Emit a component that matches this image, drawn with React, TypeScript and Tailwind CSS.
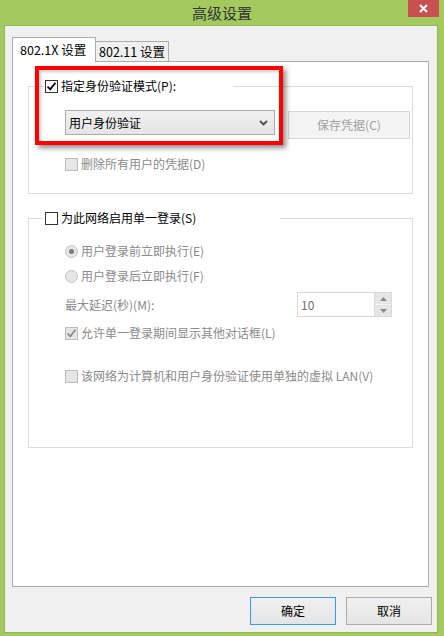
import React from "react";

function Check({ checked, disabled }: { checked?: boolean; disabled?: boolean }) {
  return (
    <span
      className={
        disabled
          ? "w-[13px] h-[13px] border border-[#bcbcbc] bg-[#e6e6e6] flex items-center justify-center shrink-0"
          : "w-[13px] h-[13px] border border-[#333333] bg-white flex items-center justify-center shrink-0"
      }
    >
      {checked && (
        <svg width="11" height="11" viewBox="0 0 11 11">
          <path
            d="M1.5 5.5 L4.2 8.3 L9.5 1.8"
            stroke={disabled ? "#8a8a8a" : "#000"}
            strokeWidth="1.8"
            fill="none"
          />
        </svg>
      )}
    </span>
  );
}

function Radio({ checked }: { checked?: boolean }) {
  return (
    <span className="w-[13px] h-[13px] rounded-full border border-[#c4c4c4] bg-[#e6e6e6] flex items-center justify-center shrink-0">
      {checked && <span className="w-[5px] h-[5px] rounded-full bg-[#7a7a7a]" />}
    </span>
  );
}

export default function App() {
  return (
    <div className="w-[444px] h-[636px] bg-[#a3c95f] flex flex-col font-['Noto_Sans_CJK_SC',sans-serif] text-[12px] leading-[16px] text-black overflow-hidden">
      {/* Title bar */}
      <div className="relative h-[25px] shrink-0 flex items-center justify-center">
        <span className="text-[15px] leading-[20px] text-[#333333] pt-[1px]">高级设置</span>
        <div className="absolute top-0 right-[5px] w-[31px] h-[17px] bg-[#c75050] flex items-center justify-center">
          <svg width="9" height="9" viewBox="0 0 9 9">
            <path d="M1 1 L8 8 M8 1 L1 8" stroke="#fff" strokeWidth="2" />
          </svg>
        </div>
      </div>

      {/* Client area */}
      <div className="ml-[4px] mr-[6px] h-[608px] border border-[#8fb64c] bg-[#f0f0f0] flex flex-col">
        {/* Tabs */}
        <div className="pt-[10px] pl-[7px] flex items-end h-[35px] shrink-0">
          <div className="relative z-10 -mb-px w-[84px] h-[25px] bg-white border border-b-0 border-[#acacac] flex items-center pl-[7px] pb-[1px] text-[12.5px]">
            802.1X 设置
          </div>
          <div className="w-[73px] h-[20px] bg-[#f0f0f0] border border-l-0 border-b-0 border-[#acacac] flex items-center pl-[3px] text-[12.5px]">
            802.11 设置
          </div>
        </div>

        {/* Tab panel */}
        <div className="relative ml-[7px] mr-[8px] h-[526px] shrink-0 bg-white border border-[#acacac] flex flex-col px-[15px]">
          {/* Group 1 */}
          <fieldset className="mt-[16px] h-[116px] border border-[#dcdcdc] px-0 flex flex-col">
            <legend className="ml-[14px] w-[190px] h-[16px] pl-[2px] flex items-center gap-[3px]">
              <Check checked />
              <span>指定身份验证模式(P):</span>
            </legend>
            <div className="mt-[16px] ml-[36px] flex items-start">
              <div className="w-[210px] h-[25px] border border-[#acacac] bg-gradient-to-b from-[#f0f0f0] to-[#e5e5e5] flex items-center justify-between pl-[3px] pr-[6px]">
                <span className="text-[12px]">用户身份验证</span>
                <svg width="9" height="6" viewBox="0 0 9 6">
                  <path d="M1 1 L4.5 4.5 L8 1" stroke="#4d4d4d" strokeWidth="1.8" fill="none" />
                </svg>
              </div>
              <div className="ml-[13px] mt-[1px] w-[122px] h-[28px] border border-[#d9d9d9] bg-[#f4f4f4] flex items-center justify-center text-[#a0a0a0]">
                保存凭据(C)
              </div>
            </div>
            <div className="mt-[17px] ml-[36px] h-[16px] flex items-center gap-[3px] text-[#8a8a8a]">
              <Check disabled />
              <span>删除所有用户的凭据(D)</span>
            </div>
          </fieldset>

          {/* Group 2 */}
          <fieldset className="mt-[16px] h-[238px] border border-[#dcdcdc] px-0 flex flex-col">
            <legend className="ml-[14px] w-[237px] h-[16px] pl-[2px] flex items-center gap-[3px]">
              <Check />
              <span>为此网络启用单一登录(S)</span>
            </legend>
            <div className="mt-[17px] ml-[36px] h-[16px] flex items-center gap-[3px] text-[#8a8a8a]">
              <Radio checked />
              <span>用户登录前立即执行(E)</span>
            </div>
            <div className="mt-[9px] ml-[36px] h-[16px] flex items-center gap-[3px] text-[#8a8a8a]">
              <Radio />
              <span>用户登录后立即执行(F)</span>
            </div>
            <div className="mt-[8px] ml-[36px] flex items-center text-[#8a8a8a]">
              <span className="w-[232px]">最大延迟(秒)(M):</span>
              <div className="w-[95px] h-[25px] border border-[#d9d9d9] bg-white flex">
                <span className="flex-1 flex items-center pl-[3px] text-[#6d6d6d]">10</span>
                <div className="w-[17px] flex flex-col border-l border-[#d9d9d9]">
                  <div className="flex-1 bg-[#e6e6e6] border-b border-[#f4f4f4] flex items-center justify-center">
                    <svg width="7" height="4" viewBox="0 0 7 4">
                      <path d="M0 4 L3.5 0 L7 4 Z" fill="#8a8a8a" />
                    </svg>
                  </div>
                  <div className="flex-1 bg-[#e6e6e6] flex items-center justify-center">
                    <svg width="7" height="4" viewBox="0 0 7 4">
                      <path d="M0 0 L3.5 4 L7 0 Z" fill="#8a8a8a" />
                    </svg>
                  </div>
                </div>
              </div>
            </div>
            <div className="mt-[8px] ml-[36px] h-[16px] flex items-center gap-[3px] text-[#8a8a8a]">
              <Check checked disabled />
              <span>允许单一登录期间显示其他对话框(L)</span>
            </div>
            <div className="mt-[27px] ml-[36px] h-[16px] flex items-center gap-[3px] text-[#8a8a8a]">
              <Check disabled />
              <span>该网络为计算机和用户身份验证使用单独的虚拟 LAN(V)</span>
            </div>
          </fieldset>

          {/* Red highlight overlay */}
          <div className="absolute left-[22px] top-[4px] w-[248px] h-[79px] border-[4px] border-[#ff0000] shadow-[3px_3px_5px_rgba(0,0,0,0.45),inset_2px_2px_3px_rgba(0,0,0,0.2)] pointer-events-none" />
        </div>

        {/* Buttons */}
        <div className="mt-[10px] pr-[5px] flex justify-end gap-[10px]">
          <div className="w-[86px] h-[28px] border border-[#3399ff] bg-gradient-to-b from-[#f0f0f0] to-[#e5e5e5] flex items-center justify-center">
            确定
          </div>
          <div className="w-[86px] h-[28px] border border-[#acacac] bg-gradient-to-b from-[#f0f0f0] to-[#e5e5e5] flex items-center justify-center">
            取消
          </div>
        </div>
      </div>
    </div>
  );
}
